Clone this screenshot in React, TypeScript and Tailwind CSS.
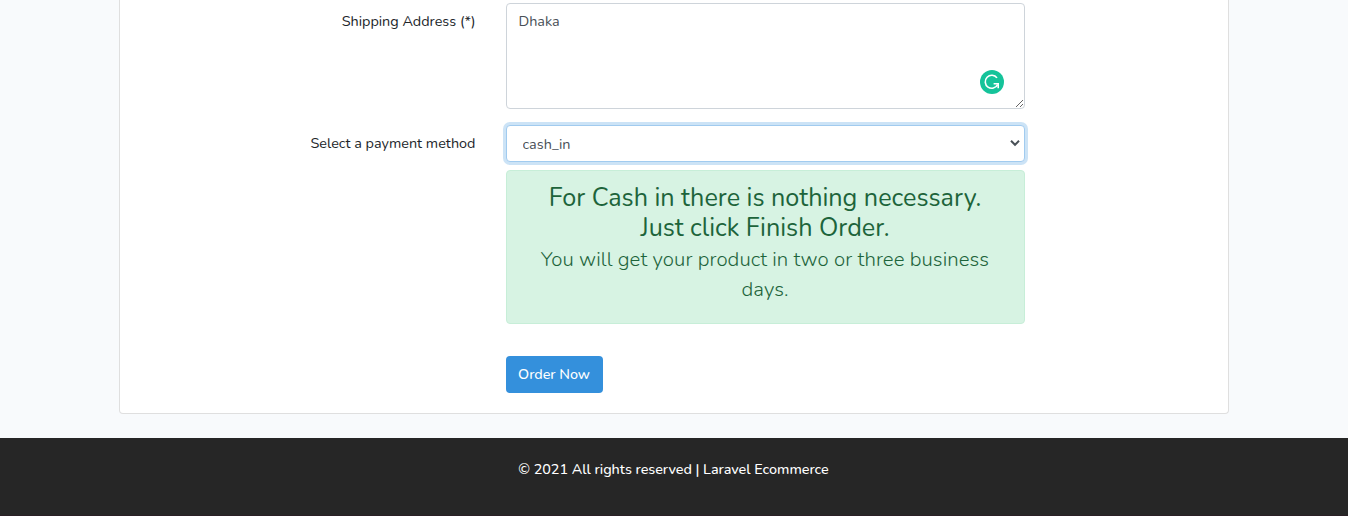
import React, { useState } from "react";

function FormRow({ label, children }: { label: string; children: React.ReactNode }) {
  return (
    <div className="flex">
      <label className="w-[370.5px] shrink-0 pr-[15px] pt-[7px] text-right leading-[23px]">{label}</label>
      <div className="ml-[15.5px] w-[519px] shrink-0">{children}</div>
    </div>
  );
}

function AssistantBadge() {
  return (
    <svg className="absolute right-[21px] top-[67px] size-6" viewBox="0 0 24 24" fill="none">
      <circle cx="12" cy="12" r="12" fill="#15c39a" />
      <path d="M17 7.9A6.5 6.5 0 1 0 17.6 14.6" stroke="#fff" strokeWidth="1.6" />
      <path d="M13.6 13.8h4.6v4.4" stroke="#fff" strokeWidth="1.6" />
    </svg>
  );
}

export default function App() {
  const [address, setAddress] = useState("Dhaka");
  return (
    <div className="flex h-[516px] flex-col overflow-hidden bg-[#f8fafc] font-['Nunito','Lato',sans-serif] text-[14.4px] text-[#212529]">
      <main className="mx-auto h-[414px] w-[1110px] shrink-0 rounded-b-[4px] border border-t-0 border-[#dfdfdf] bg-white pt-[3px]">
        <FormRow label="Shipping Address (*)">
          <div className="relative h-[106px]">
            <textarea
              className="block h-[106px] w-full resize rounded-[4px] border border-[#ced4da] bg-white pr-3 pl-[11.5px] py-[6px] leading-[23px] text-[#495057] outline-none"
              spellCheck={false}
              value={address}
              onChange={(e) => setAddress(e.target.value)}
            />
            <AssistantBadge />
          </div>
        </FormRow>
        <div className="mt-4">
          <FormRow label="Select a payment method">
            <div className="relative">
              <select className="block h-[37px] w-full appearance-none rounded-[4px] border border-[#a1cbef] bg-white pr-4 pl-[15.5px] pt-[2px] text-[#495057] shadow-[0_0_0_3px_rgba(52,144,220,0.25)] outline-none">
                <option>cash_in</option>
              </select>
              <svg className="pointer-events-none absolute right-[4px] top-[14px] h-2 w-3" viewBox="0 0 12 8" fill="none">
                <path d="M2 1.8 6 5.8 10 1.8" stroke="#495057" strokeWidth="2" />
              </svg>
            </div>
            <div className="mt-2 h-[154px] rounded-[4px] border border-[#c7eed8] bg-[#d7f3e3] px-5 pt-3 text-center text-[#1d643b]">
              <h3 className="pr-px text-[25.2px] leading-[30px]">
                For Cash in there is nothing necessary.
                <br />
                Just click Finish Order.
              </h3>
              <p className="pr-px pt-[1px] text-[20.4px] leading-[30px] font-light tracking-[0.07px]">
                You will get your product in two or three business
                <br />
                days.
              </p>
            </div>
            <button className="mt-8 block h-[37px] w-[97px] rounded-[4px] bg-[#3490dc] pr-px font-medium tracking-[-0.03px] text-white">Order Now</button>
          </FormRow>
        </div>
      </main>
      <footer className="mt-6 h-[78px] border-b border-[#2a1f25] bg-[#262626] pr-px pt-5 text-center leading-[23px] font-medium tracking-[-0.04px] text-white">
        © 2021 All rights reserved | Laravel Ecommerce
      </footer>
    </div>
  );
}
